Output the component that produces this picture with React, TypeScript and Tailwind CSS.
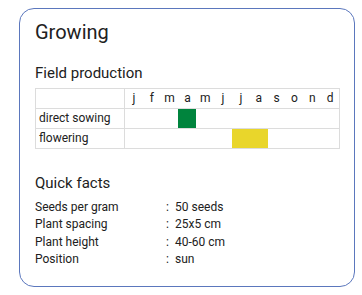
import React from "react";

const months = ["j", "f", "m", "a", "m", "j", "j", "a", "s", "o", "n", "d"];

const rows = [
  { label: "direct sowing", from: 3, to: 3, color: "bg-[#00843d]" },
  { label: "flowering", from: 6, to: 7, color: "bg-[#e9d62b]" },
];

const facts = [
  ["Seeds per gram", "50 seeds"],
  ["Plant spacing", "25x5 cm"],
  ["Plant height", "40-60 cm"],
  ["Position", "sun"],
];

export default function App() {
  return (
    <div className="min-h-screen bg-white font-['Roboto',sans-serif] text-[#212121]">
      <div className="ml-[19px] pt-[8px]">
        <div className="w-[336px] h-[279px] rounded-[15px] border border-[#5b77bd] pl-[15px]">
          <h1 className="mt-[11px] text-[20px] leading-[24px]">Growing</h1>

          <h2 className="mt-[19px] text-[15px] leading-[20px]">Field production</h2>

          <div className="mt-[5px] w-[305px] border border-[#dcdcdc] text-[12px] leading-[19px]">
            <div className="flex h-[20px] border-b border-[#dcdcdc]">
              <div className="w-[89px] border-r border-[#dcdcdc]" />
              {months.map((m, i) => (
                <div key={i} className="flex-1 text-center">
                  {m}
                </div>
              ))}
            </div>
            {rows.map((r, ri) => (
              <div
                key={r.label}
                className={
                  "flex " + (ri < rows.length - 1 ? "h-[20px] border-b border-[#dcdcdc]" : "h-[19px]")
                }
              >
                <div className="w-[89px] border-r border-[#dcdcdc] pl-[3px]">{r.label}</div>
                {months.map((_, i) => (
                  <div key={i} className={"flex-1 " + (i >= r.from && i <= r.to ? r.color : "")} />
                ))}
              </div>
            ))}
          </div>

          <h2 className="mt-[24px] text-[15px] leading-[20px]">Quick facts</h2>

          <div className="mt-[6px] grid grid-cols-[131px_9px_1fr] text-[12px] leading-[17.3px]">
            {facts.map(([k, v]) => (
              <React.Fragment key={k}>
                <div>{k}</div>
                <div>:</div>
                <div>{v}</div>
              </React.Fragment>
            ))}
          </div>
        </div>
      </div>
    </div>
  );
}
